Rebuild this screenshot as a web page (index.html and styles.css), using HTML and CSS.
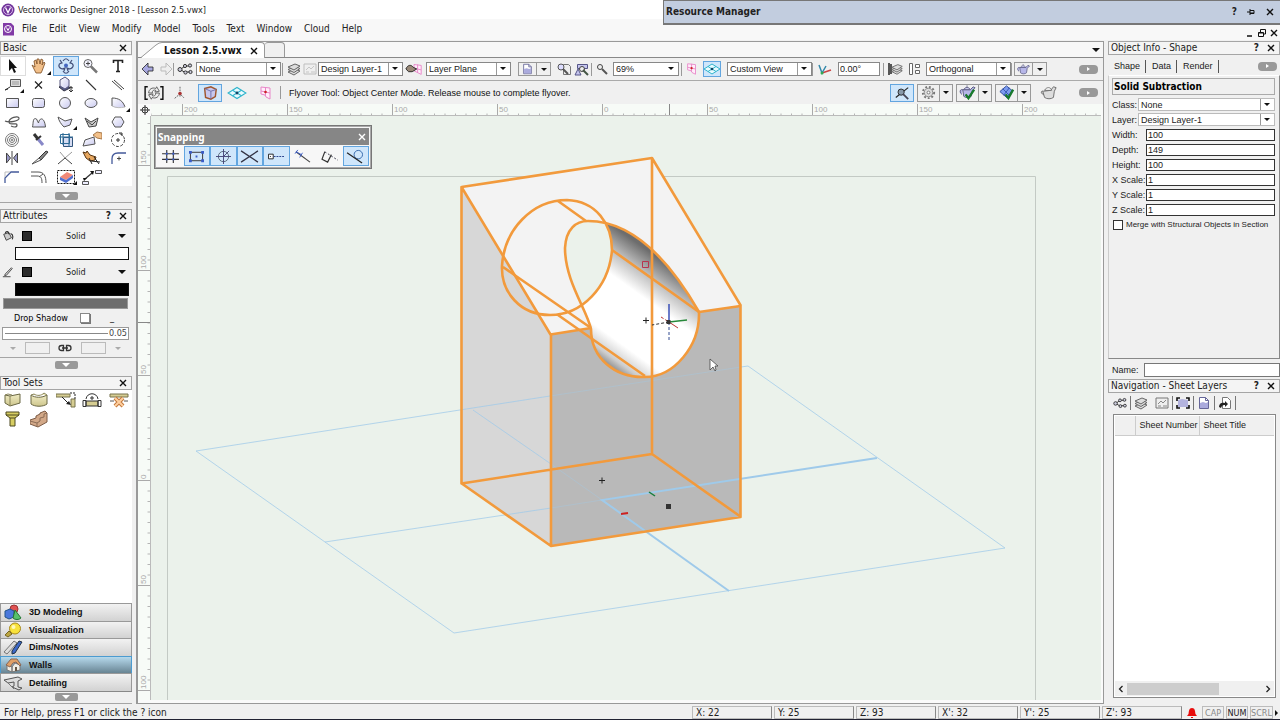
FILE: index.html
```html
<!DOCTYPE html>
<html lang="en">
<head>
<meta charset="utf-8">
<title>Vectorworks Designer 2018 - [Lesson 2.5.vwx]</title>
<link rel="stylesheet" href="styles.css">
</head>
<body>
<svg class="sprite" aria-hidden="true">
  <defs>
    <linearGradient id="lav" x1="0" y1="0" x2="1" y2="1"><stop offset="0" stop-color="#fff"/><stop offset="1" stop-color="#c9c9f0"/></linearGradient>
    <linearGradient id="wall" x1="0" y1="0" x2="0" y2="1"><stop offset="0" stop-color="#f0ecc4"/><stop offset="1" stop-color="#cdc58c"/></linearGradient>
  </defs>
  <symbol id="i-classes" viewBox="0 0 18 14"><g fill="#ccd" stroke="#333"><path d="M5 7L9 4M5 8l5 3M9 4h4M10 10h4" fill="none"/><circle cx="4" cy="7.500" r="2"/><circle cx="9" cy="4" r="1.600"/><circle cx="14" cy="3.500" r="1.600"/><circle cx="9.500" cy="10.500" r="1.600"/><circle cx="14.500" cy="10" r="1.600"/></g></symbol>
  <symbol id="i-layers" viewBox="0 0 16 14"><g fill="#ddd" stroke="#666"><path d="M2 10l7-3 5 2-6 4z"/><path d="M2 7.500l7-3 5 2-6 4z"/><path d="M2 5l7-3 5 2-6 4z"/></g></symbol>
  <symbol id="i-sheet" viewBox="0 0 16 14"><path d="M2 2h12v10H2z" fill="#eee" stroke="#777"/><path d="M4 8l3-3 2 2 3-3M4 10h3M9 10h4" fill="none" stroke="#888"/></symbol>
  <symbol id="i-doc" viewBox="0 0 16 14"><path d="M3.500 1.500h6l3 3v8h-9z" fill="#fff" stroke="#669"/><path d="M4 7l3-1 3 1 2-1v6H4z" fill="#aaaadd"/><path d="M9.500 1.500v3h3" fill="none" stroke="#669"/></symbol>
  <symbol id="i-plane" viewBox="0 0 16 16"><path d="M3 2l9 1v11l-4-2-1-2-4-1z" fill="#ffeefa" stroke="#e886c8"/><path d="M7.500 2v9M3 6l9 2" stroke="#e886c8"/><circle cx="7.500" cy="7" r="1.300" fill="#c22"/></symbol>
  <symbol id="i-flat" viewBox="0 0 18 14"><path d="M1 7l8-5 8 5-8 5z" fill="#e9fbff" stroke="#30b4cc"/><path d="M5 4.500l8 5M13 4.500l-8 5" stroke="#30b4cc"/><circle cx="9" cy="7" r="1.300" fill="#146"/></symbol>
  <symbol id="i-teapot" viewBox="0 0 18 16"><path d="M4 6l1 7c2 2 6 2 8 0l1-6 3-3-2-1-3 3H4c-3-1-4 3-1 5" fill="#b6b6e8" stroke="#5b5b82"/><path d="M5 6c1-3 6-3 7 0zM8.500 3V1.500" fill="#d5d5f7" stroke="#5b5b82"/></symbol>
  <symbol id="i-close" viewBox="0 0 10 10"><path d="M2 2l6 6M8 2l-6 6" stroke="#111" stroke-width="1.400"/></symbol>
</svg>

<header class="titlebar">
  <svg class="logo" viewBox="0 0 14 14"><circle cx="7" cy="7" r="6.500" fill="#70339a"/><circle cx="7" cy="7" r="4.500" fill="none" stroke="#d9b9ea"/><path d="M4.500 4.500L7 9.500l2.500-5" fill="none" stroke="#fff" stroke-width="1.300"/></svg>
  <span>Vectorworks Designer 2018 - [Lesson 2.5.vwx]</span>
</header>
<nav class="menubar">
  <svg class="logo" viewBox="0 0 14 14"><path d="M2 1h8l3 3v9.500H2z" fill="#813aa6"/><circle cx="7" cy="7" r="3.500" fill="none" stroke="#fff"/><path d="M5.500 5.500L7 8.500l1.500-3" fill="none" stroke="#fff"/></svg>
  <button>File</button><button>Edit</button><button>View</button><button>Modify</button><button>Model</button><button>Tools</button><button>Text</button><button>Window</button><button>Cloud</button><button>Help</button>
  <span class="mdi">
    <button aria-label="Minimize"><svg viewBox="0 0 10 10"><path d="M2 8h5" stroke="#111" stroke-width="1.500"/></svg></button>
    <button aria-label="Restore"><svg viewBox="0 0 10 10"><path d="M3.500 4V1.500h5V6H6.500M1.500 4.500h5v4h-5zM1.500 5h5" fill="none" stroke="#111"/></svg></button>
    <button aria-label="Close"><svg viewBox="0 0 10 10"><use href="#i-close"/></svg></button>
  </span>
</nav>
<section class="resource">
  <strong>Resource Manager</strong>
  <button class="q">?</button>
  <button aria-label="Pin"><svg viewBox="0 0 10 10"><path d="M1 5h3M4 2v6M4 3.500h4v3H4M4 6h4" fill="none" stroke="#111"/></svg></button>
  <button aria-label="Close"><svg viewBox="0 0 10 10"><use href="#i-close"/></svg></button>
</section>

<main class="workspace">
  <aside class="left">
    <h2 class="phead">Basic <button class="end" aria-label="Close Basic"><svg viewBox="0 0 10 10"><use href="#i-close"/></svg></button></h2>
    <div class="tools">
      <button class="boxed" aria-label="Selection"><svg viewBox="0 0 20 18"><path d="M6 2v12l3-3 2 5 2-1-2-4h3z" fill="#111"/></svg></button>
      <button class="more" aria-label="Pan"><svg viewBox="0 0 20 18"><path d="M2 8l3 2-1-6 2-1 1 4V2l2 0 1 5 1-5 2 1-1 5 2-3 1 1-3 8-1 2H6z" fill="#f2c08a" stroke="#7a4a20" stroke-width=".8"/></svg></button>
      <button class="on" aria-label="Flyover"><svg viewBox="0 0 20 18"><g fill="none" stroke="#44507a" stroke-width="1.200"><path d="M5 6c-4 2-2 6 3 6M15 6c4 2 2 6-3 6M7 4c2-3 4-3 6 0M7 14c2 3 4 3 6 0M4 3l2 3-3 1M16 3l-2 3 3 1M6 12l3-1-1 3M14 12l-3-1 1 3"/></g><circle cx="10" cy="8.500" r="2" fill="#4466c0"/></svg></button>
      <button aria-label="Zoom"><svg viewBox="0 0 20 18"><circle cx="6" cy="6.500" r="4" fill="#f4f4ff" stroke="#666"/><path d="M4 6.500h4M6 4.500v4" stroke="#444"/><path d="M9 9.500l6 6" stroke="#777" stroke-width="2.500"/></svg></button>
      <button aria-label="Text"><svg viewBox="0 0 20 18"><path d="M4.500 6V3.500h9V6M9 4v11M7 14.500h4" fill="none" stroke="#222" stroke-width="1.600"/></svg></button>
      <button class="more" aria-label="Callout"><svg viewBox="0 0 20 18"><path d="M7.500 3.500h10v7h-10z" fill="#ddd" stroke="#555"/><path d="M9 6h7M9 8h7" stroke="#999"/><path d="M7 11l-5 3 3-1" fill="none" stroke="#333"/></svg></button>
      <button aria-label="Locus"><svg viewBox="0 0 20 18"><path d="M5 5.500l7 7M12 5.500l-7 7" stroke="#222" stroke-width="1.200"/></svg></button>
      <button aria-label="Symbol"><svg viewBox="0 0 20 18"><path d="M3 11l5 4 6-3-5-4z" fill="#555a88" stroke="#334"/><path d="M4 4l5-3 4 3v6l-4 3-5-3z" fill="url(#lav)" stroke="#55557c"/><path d="M13 11l4 1M15 10v6M13 14l2 2 2-2" stroke="#333" fill="none"/></svg></button>
      <button aria-label="Line"><svg viewBox="0 0 20 18"><path d="M4 4l10 10" stroke="#333" stroke-width="1.100"/></svg></button>
      <button aria-label="Double line"><svg viewBox="0 0 20 18"><path d="M3 5l10 9M5 4l10 9" stroke="#444"/></svg></button>
      <button aria-label="Rectangle"><svg viewBox="0 0 20 18"><path d="M3.500 4.500h12v9h-12z" fill="url(#lav)" stroke="#555"/></svg></button>
      <button aria-label="Rounded rectangle"><svg viewBox="0 0 20 18"><rect x="2.500" y="4.500" width="12" height="9" rx="2" fill="url(#lav)" stroke="#555"/></svg></button>
      <button aria-label="Circle"><svg viewBox="0 0 20 18"><circle cx="9" cy="9" r="5.500" fill="url(#lav)" stroke="#555"/></svg></button>
      <button aria-label="Oval"><svg viewBox="0 0 20 18"><ellipse cx="9" cy="9" rx="6" ry="4.500" fill="url(#lav)" stroke="#555"/></svg></button>
      <button class="more" aria-label="Arc"><svg viewBox="0 0 20 18"><path d="M3 4c7 0 11 3 13 9l-9 1-4-2z" fill="url(#lav)"/><path d="M3 12V4c7 0 11 3 13 9" fill="none" stroke="#555"/><path d="M3 12c4 2 8 2 13 1" fill="none" stroke="#bbb"/></svg></button>
      <button aria-label="Freehand"><svg viewBox="0 0 20 18"><path d="M2 8c4 2 15 0 14-3S6 5 6 9s8 0 8 3-4 2-6 1" fill="none" stroke="#555" stroke-width="1.200"/></svg></button>
      <button aria-label="Spline"><svg viewBox="0 0 20 18"><path d="M2.500 14c1-4 0-10 4-8l2 4c1-6 6-6 7 4z" fill="url(#lav)" stroke="#555"/></svg></button>
      <button class="more" aria-label="Polyline"><svg viewBox="0 0 20 18"><path d="M2 4l7 4 7-2-2 6-6 2c-3-3-5-6-6-10z" fill="url(#lav)" stroke="#555"/></svg></button>
      <button aria-label="Polygon"><svg viewBox="0 0 20 18"><path d="M3 5l6 4 7-4-2 8-7 1z" fill="#ccc" stroke="#444"/><path d="M5 8l5 4 4-4" fill="none" stroke="#444"/></svg></button>
      <button aria-label="Regular polygon"><svg viewBox="0 0 20 18"><path d="M6 4h6l3 5-3 5H6L3 9z" fill="url(#lav)" stroke="#555"/></svg></button>
      <button aria-label="Spiral"><svg viewBox="0 0 20 18"><g fill="none" stroke="#777"><circle cx="9" cy="9" r="6.500"/><circle cx="9" cy="9" r="4.500"/><circle cx="9" cy="9" r="2.500"/><circle cx="9" cy="9" r=".8"/></g></svg></button>
      <button aria-label="Eyedropper"><svg viewBox="0 0 20 18"><path d="M8 8l5 6" stroke="#8888c8" stroke-width="3"/><path d="M4 3l4 5" stroke="#333" stroke-width="3"/><path d="M6 9l5-4" stroke="#333" stroke-width="2"/></svg></button>
      <button aria-label="Clip"><svg viewBox="0 0 20 18"><path d="M7.500 6.500h9v9h-9z" fill="#d5dcf2" stroke="#33557c"/><path d="M4.500 3.500h9v9h-9zM3 6h14M13 2v14M7 2v12" fill="none" stroke="#2c6b96"/></svg></button>
      <button aria-label="Reshape"><svg viewBox="0 0 20 18"><path d="M1 15l2-6 9-3 1 7z" fill="url(#lav)" stroke="#555"/><path d="M11 4l4-3 5 1v6l-5-1z" fill="#f2c08a" stroke="#a67748"/></svg></button>
      <button aria-label="Rotate"><svg viewBox="0 0 20 18"><circle cx="9" cy="9" r="6.500" fill="none" stroke="#444" stroke-dasharray="3 1.500"/><path d="M7 9h4M9 7v4M10 2l3 0v3" stroke="#333" fill="none"/></svg></button>
      <button aria-label="Mirror"><svg viewBox="0 0 20 18"><path d="M3.500 4v10l4-5zM14.500 4v10l-4-5z" fill="#9a9ac8" stroke="#444"/><path d="M9 2v14" stroke="#444"/></svg></button>
      <button aria-label="Split"><svg viewBox="0 0 20 18"><path d="M9 9l7-7 2 1-7 8z" fill="#888" stroke="#333"/><path d="M2 15l7-6 2 2z" fill="#eee" stroke="#555"/></svg></button>
      <button aria-label="Intersect"><svg viewBox="0 0 20 18"><path d="M4 3l5 6L16 3" stroke="#999" fill="none"/><path d="M2 15l7-6 7 6" stroke="#444" fill="none"/></svg></button>
      <button aria-label="Connect"><svg viewBox="0 0 20 18"><path d="M1 3l3 1 1-2 3 4 6 2-1 3-5 1-4-3z" fill="#e8a860" stroke="#553311"/><path d="M7 9l3 6M9 12l9 1M12 8l5 7" stroke="#222"/></svg></button>
      <button aria-label="Fillet"><svg viewBox="0 0 20 18"><path d="M3 15v-5c0-4 2-6 6-6h8" fill="none" stroke="#445a9a" stroke-width="1.300"/><path d="M8 9.500h4M10 7.500v4" stroke="#444"/></svg></button>
      <button aria-label="Chamfer"><svg viewBox="0 0 20 18"><path d="M2 15v-5l6-6h8" fill="none" stroke="#445a9a" stroke-width="1.300"/><path d="M2 4h5M2 4v5" stroke="#bbb"/></svg></button>
      <button aria-label="Offset"><svg viewBox="0 0 20 18"><path d="M1 4h7c6 0 8 4 8 11M1 8h6c4 0 5 2 5 7M9 9l4-3" fill="none" stroke="#555"/></svg></button>
      <button class="more" aria-label="Eraser"><svg viewBox="0 0 20 18"><path d="M1.500 2.500h17v13h-17z" fill="none" stroke="#111" stroke-dasharray="2 1"/><path d="M4 9l7-5 6 3-7 5z" fill="#f08878"/><path d="M4 9l6 3v3l-6-3zM10 12l7-5v3l-7 5z" fill="#4f6fd0"/></svg></button>
      <button aria-label="Connector"><svg viewBox="0 0 20 18"><path d="M.5 13.500h6v3h-6zM13.500 2.500h6v3h-6z" fill="#eef" stroke="#555"/><path d="M3 11l7-6" stroke="#333" stroke-width="1.200"/><path d="M8 3l4 0-1 4zM1 10l4 0-3 3z" fill="#111"/></svg></button>
    </div>
    <div class="fold"><button aria-label="Collapse Basic"></button></div>

    <h2 class="phead gap">Attributes <button class="q">?</button><button aria-label="Close Attributes"><svg viewBox="0 0 10 10"><use href="#i-close"/></svg></button></h2>
    <div class="attrs">
      <div class="style-row"><svg viewBox="0 0 14 14"><path d="M2 5l6-2 3 6-6 3z" fill="#ccc" stroke="#333"/><path d="M4 4c0-3 4-3 4 1M10 4c3 1 3 4 2 7" fill="none" stroke="#333" stroke-width="1.300"/></svg><i></i><select aria-label="Fill style"><option>Solid</option></select></div>
      <button class="swatch white" aria-label="Fill colour"></button>
      <div class="style-row"><svg viewBox="0 0 14 14"><path d="M4 9l7-7 1 1-7 8-2 0z" fill="#ccc" stroke="#444"/><path d="M1 12.500h9" stroke="#333"/></svg><i></i><select aria-label="Pen style"><option>Solid</option></select></div>
      <button class="swatch black" aria-label="Pen colour"></button>
      <button class="opacity" aria-label="Opacity"></button>
      <div class="shadow-row"><label for="shadow">Drop Shadow</label><input id="shadow" type="checkbox"><span>_</span></div>
      <button class="thickness" aria-label="Line thickness"><i></i>0.05</button>
      <div class="markers"><b></b><i></i><svg viewBox="0 0 14 10"><path d="M5.500 2.500h-2a2.500 2.500 0 000 5h2zM8.500 2.500h2a2.500 2.500 0 010 5h-2zM4 5h6" fill="none" stroke="#333" stroke-width="1.300"/></svg><i></i><b></b></div>
    </div>
    <div class="fold"><button aria-label="Collapse Attributes"></button></div>

    <h2 class="phead">Tool Sets <button class="end" aria-label="Close Tool Sets"><svg viewBox="0 0 10 10"><use href="#i-close"/></svg></button></h2>
    <div class="sets">
      <button aria-label="Wall"><svg viewBox="0 0 20 18"><path d="M2 4l5 1 10-2v9L7 15l-5-3z" fill="url(#wall)" stroke="#6b6844"/><path d="M2 4l3-1 4 1M7 5v10" fill="none" stroke="#8a865c"/></svg></button>
      <button aria-label="Round wall"><svg viewBox="0 0 20 18"><path d="M1 4c4 3 11 3 16 0v9c-4 3-12 3-16 0z" fill="url(#wall)" stroke="#6b6844"/><path d="M1 4l3-1c3 2 7 2 10-1l3 2" fill="#eee8bd" stroke="#8a865c"/></svg></button>
      <button aria-label="Wall join"><svg viewBox="0 0 20 18"><path d="M0 3h14v3H0zM15 8h4v8h-4z" fill="#d6cd92" stroke="#77724c"/><path d="M6 6l7 7" stroke="#222"/><path d="M14 2h5v6" fill="none" stroke="#222" stroke-dasharray="2 1"/><path d="M15 14l-5-1 3-3z" fill="#222"/></svg></button>
      <button aria-label="Component join"><svg viewBox="0 0 20 18"><path d="M4 10h12v5H4z" fill="#d6cd92" stroke="#333"/><path d="M1 9.500h3v6H1zM16 9.500h3v6h-3zM4 8c1-7 11-7 12 0M10 5v4M8 7h4" fill="none" stroke="#333"/></svg></button>
      <button aria-label="Wall end cap"><svg viewBox="0 0 20 18"><path d="M1 3h18v3H1z" fill="#d6cd92" stroke="#77724c"/><path d="M6 7l8 8M14 7l-8 8" stroke="#c2773a" stroke-width="4"/><path d="M6 7l8 8M14 7l-8 8" stroke="#ffd0a0" stroke-width="2"/><path d="M1 10h4M15 10h4" stroke="#555"/></svg></button>
      <button aria-label="Column"><svg viewBox="0 0 20 18"><path d="M3 2h13v3l-4 3v8H7V8L3 5z" fill="#d6cd62" stroke="#4d4820"/><path d="M3 5h13M7 8h5" stroke="#4d4820"/></svg></button>
      <button aria-label="Stair"><svg viewBox="0 0 20 18"><path d="M0 10l6-2V6l4-2V3l5-2 2 2v9l-9 5-8-3z" fill="#d2a888" stroke="#7c5b45"/><path d="M0 11l7 2 3-2V8l4-1V4l3-1M7 13v4" fill="none" stroke="#8c6c55"/></svg></button>
    </div>
    <div class="cats">
      <button><svg viewBox="0 0 20 16"><circle cx="11" cy="5" r="4" fill="#e05252" stroke="#933"/><path d="M2 7l5-2 4 2v6l-5 2-4-2z" fill="#4a78dc" stroke="#258"/><path d="M12 6l6 8c-2 2-6 2-8 0z" fill="#58c26a" stroke="#273"/></svg>3D Modeling</button>
      <button><svg viewBox="0 0 20 16"><circle cx="12" cy="6.500" r="5.500" fill="#f8e23c" stroke="#a8891c"/><circle cx="10.500" cy="5" r="2" fill="#fff9b8"/><path d="M6 9l3 3-4 3-3-2z" fill="#bba542" stroke="#776622"/></svg>Visualization</button>
      <button><svg viewBox="0 0 20 16"><path d="M1 13L11 2l3 2L4 15z" fill="#ddd" stroke="#777"/><path d="M9 12l7-10 3 1-7 11-3 1z" fill="#3d68c8" stroke="#234"/></svg>Dims/Notes</button>
      <button class="sel"><svg viewBox="0 0 20 16"><path d="M4 7l5 3v5l-5-2zM9 10l3-4 5 2v5l-8 2z" fill="#f1eee6" stroke="#777"/><path d="M3 8l5-6 6 0 4 6-1 1-4-4-3 1-3 4z" fill="#e0a067" stroke="#865"/><path d="M12 10h2v4h-2z" fill="#654"/></svg>Walls</button>
      <button><svg viewBox="0 0 20 16"><path d="M1 5L15 2l4 2-4 2v6l4 1-3 2-7-3 2-1V7L5 8z" fill="#ddd" stroke="#555"/><path d="M3 6l8 8" stroke="#777"/></svg>Detailing</button>
    </div>
    <div class="fold last"><button aria-label="Collapse Tool Sets"></button></div>
  </aside>

  <section class="center">
    <div class="tabs">
      <svg class="slant" viewBox="0 0 26 16"><path d="M3 16L18 3q3-2.500 6-2.500h2V16z" fill="#fff"/><path d="M3 15.500L18 3q3-2.500 6-2.500h2" fill="none" stroke="#999"/></svg>
      <button class="tab">Lesson 2.5.vwx <svg viewBox="0 0 10 10"><use href="#i-close"/></svg></button><i class="newtab"></i>
      <button class="tri" aria-label="Open documents"></button>
    </div>
    <div class="bar view">
      <button class="ic w18" aria-label="Back"><svg viewBox="0 0 16 14"><path d="M8 1L2 7l6 6V9h5V5H8z" fill="#a8a8e0" stroke="#222" stroke-width=".8"/></svg></button>
      <button class="ic w16" aria-label="Forward"><svg viewBox="0 0 16 14"><path d="M8 1l6 6-6 6V9H3V5h5z" fill="#eee" stroke="#bbb"/></svg></button><hr>
      <button class="ic w20" aria-label="Classes"><svg viewBox="0 0 18 14"><use href="#i-classes"/></svg></button>
      <span class="combo w84"><select aria-label="Active class"><option>None</option></select></span><hr class="sp">
      <button class="ic w16" aria-label="Layers"><svg viewBox="0 0 16 14"><use href="#i-layers"/></svg></button>
      <button class="ic w16 dim" aria-label="Sheets"><svg viewBox="0 0 16 14"><use href="#i-sheet"/></svg></button>
      <span class="combo w84"><select aria-label="Active layer"><option>Design Layer-1</option></select></span>
      <button class="ic w22" aria-label="Plane"><svg viewBox="0 0 20 14"><path d="M10 2l8 1v10l-8-4zM10 6l8 2M14 2v9" fill="#ffeefa" stroke="#e886c8"/><path d="M1 7c2-5 6-5 8-2l4 2-5 3H4z" fill="#987" stroke="#222"/></svg></button>
      <span class="combo w84"><select aria-label="Active plane"><option>Layer Plane</option></select></span>
      <button class="duo" aria-label="Saved views"><svg viewBox="0 0 16 14"><use href="#i-doc"/></svg><i></i></button>
      <button class="ic w18" aria-label="Fit to page"><svg viewBox="0 0 18 14"><path d="M8.500 2.500h5l2 2v8h-7z" fill="#eee" stroke="#777"/><circle cx="6" cy="5" r="3" fill="#ddf" stroke="#555"/><path d="M8 7l5 5" stroke="#555" stroke-width="2"/></svg></button>
      <button class="ic w18" aria-label="Fit to objects"><svg viewBox="0 0 18 14"><path d="M4.500 2.500h10v4h-10zM2 13l3-6 3 6z" fill="#c5c5ee" stroke="#558"/><circle cx="9" cy="7" r="2.500" fill="#eee" stroke="#444"/><path d="M10 8l5 5" stroke="#454" stroke-width="2"/></svg></button><hr>
      <button class="ic w20" aria-label="Zoom line"><svg viewBox="0 0 18 14"><circle cx="6" cy="5" r="2.500" fill="#eee" stroke="#444"/><path d="M8 7l5 5" stroke="#555" stroke-width="2"/></svg></button>
      <span class="combo w66 plain"><select aria-label="Zoom"><option>69%</option></select></span><hr>
      <button class="ic w18" aria-label="Projection"><svg viewBox="0 0 16 16"><use href="#i-plane"/></svg></button>
      <button class="ic w18 on" aria-label="Unified view"><svg viewBox="0 0 18 14"><use href="#i-flat"/></svg></button>
      <span class="combo w86"><select aria-label="Standard view"><option>Custom View</option></select></span><hr>
      <button class="ic w24" aria-label="Rotate plan"><svg viewBox="0 0 18 14"><path d="M5 11l9-3" stroke="#c44" stroke-width="1.500"/><path d="M2 3l3 8 4-7" stroke="#38a" stroke-width="1.500" fill="none"/><circle cx="5" cy="11" r="1.500" fill="#3a5"/></svg></button>
      <input class="w42" aria-label="Plan rotation" value="0.00°"><hr>
      <button class="ic w20" aria-label="Stack layers"><svg viewBox="0 0 18 14"><path d="M3 1v12M5 2v10" stroke="#222" stroke-width="1.500"/><use href="#i-layers" x="4" width="14" height="14"/></svg></button>
      <button class="ic w20" aria-label="Multiple views"><svg viewBox="0 0 18 14"><path d="M3.500 1.500h3v11h-3zM9.500 2.500h4v3h-4zM9.500 8.500h4v3h-4z" fill="#fff" stroke="#666"/></svg></button>
      <span class="combo w84"><select aria-label="Projection mode"><option>Orthogonal</option></select></span><hr>
      <button class="duo" aria-label="Render mode"><svg viewBox="0 0 18 16"><use href="#i-teapot"/></svg><i></i></button>
      <button class="pill" aria-label="More view options"></button>
    </div>
    <div class="bar mode">
      <button class="ic w26" aria-label="Toggle mode"><svg viewBox="0 0 22 18"><path d="M4 2H1v14h3M18 2h3v14h-3" fill="none" stroke="#111" stroke-width="1.600"/><path d="M5 9c0-4 4-7 8-5l1-2 3 5-5 1 1-2c-2-1-4 0-4 3zM17 9c0 4-4 7-8 5l-1 2-3-5 5-1-1 2c2 1 4 0 4-3z" fill="#eee" stroke="#555"/></svg></button>
      <button class="ic w26" aria-label="Interactive center"><svg viewBox="0 0 20 18"><path d="M10 2v12M4 15l6-5 5 5" stroke="#555" stroke-dasharray="2 1" fill="none"/><circle cx="10" cy="9.500" r="2" fill="#a33"/></svg></button>
      <button class="ic w24 on big" aria-label="Object center mode"><svg viewBox="0 0 20 18"><path d="M4 4l7-2 6 3-1 8-5 3-6-2z" fill="#c7c7ee" stroke="#a0552c" stroke-width="1.600"/><path d="M4 4l7 3 6-2M11 7v9" fill="none" stroke="#6b6ba8"/></svg></button>
      <button class="ic w30" aria-label="Plane center"><svg viewBox="0 0 18 14"><use href="#i-flat"/></svg></button>
      <button class="ic w30" aria-label="View center"><svg viewBox="0 0 16 16"><use href="#i-plane"/></svg></button><hr>
      <span class="hint">Flyover Tool: Object Center Mode. Release mouse to complete flyover.</span>
      <span class="modes-right">
        <button class="ic w24 on big" aria-label="Magnify snap"><svg viewBox="0 0 20 18"><path d="M3 14L17 3" stroke="#222" stroke-width="1.300"/><circle cx="9" cy="8" r="3.500" fill="#89a" stroke="#222"/><path d="M11 10l6 6" stroke="#445" stroke-width="2"/></svg></button>
        <button class="duo big" aria-label="Preferences"><svg viewBox="0 0 18 18"><circle cx="9" cy="9" r="6" fill="none" stroke="#777" stroke-width="2" stroke-dasharray="2 2"/><circle cx="9" cy="9" r="4.500" fill="#ddd" stroke="#888"/><circle cx="9" cy="9" r="1.500" fill="#fff" stroke="#777"/></svg><i></i></button>
        <button class="duo big" aria-label="Render visibility"><svg viewBox="0 0 18 18"><use href="#i-teapot" width="18" height="16"/><path d="M7 11l3 4 6-9" stroke="#187a2c" stroke-width="2.500" fill="none"/></svg><i></i></button>
        <button class="duo big" aria-label="Render texture"><svg viewBox="0 0 18 18"><path d="M2 8l7-6 6 5-5 8z" fill="#7d9cf0" stroke="#2c4a9c"/><path d="M5 5l7 7M6 12l6-8" stroke="#3558b0"/><path d="M8 11l3 4 5-9" stroke="#187a2c" stroke-width="2.500" fill="none"/></svg><i></i></button>
        <button class="ic w30" aria-label="Show object"><svg viewBox="0 0 20 18"><path d="M3 7l2 7c3 2 7 2 10 0l1-7 2-4-3-1-3 4-8 1C1 6 0 9 4 11" fill="#ddd" stroke="#666"/><path d="M5 6c2-4 7-4 8 0z" fill="#fff" stroke="#666"/></svg></button>
        <button class="pill" aria-label="More tool options"></button>
      </span>
    </div>
    <div class="sheet">
      <div class="corner"><svg viewBox="0 0 12 12"><circle cx="6" cy="6" r="3" fill="none" stroke="#333"/><path d="M6 1v10M1 6h10" stroke="#333"/></svg></div>
      <svg class="ruler-x"><defs><pattern id="tx" x="31" width="105" height="12" patternUnits="userSpaceOnUse"><path d="M.5 0v12" stroke="#aaa"/><path d="M11 9.500v2.500M21.500 9.500v2.500M32 9.500v2.500M42.500 9.500v2.500M53 9.500v2.500M63.500 9.500v2.500M74 9.500v2.500M84.500 9.500v2.500M95 9.500v2.500" stroke="#b5b5b5"/></pattern></defs>
        <rect width="100%" height="12" fill="url(#tx)"/><path d="M518.500 0v12" stroke="#888"/>
        <g><text x="33" y="8">200</text><text x="138" y="8">150</text><text x="243" y="8">100</text><text x="348" y="8">50</text><text x="453" y="8">0</text><text x="558" y="8">50</text><text x="663" y="8">100</text><text x="768" y="8">150</text><text x="873" y="8">200</text></g></svg>
      <svg class="ruler-y"><defs><pattern id="ty" y="49" width="12" height="105" patternUnits="userSpaceOnUse"><path d="M0 .5h12" stroke="#aaa"/><path d="M9.500 11h2.500M9.500 21.500h2.500M9.500 32h2.500M9.500 42.500h2.500M9.500 53h2.500M9.500 63.500h2.500M9.500 74h2.500M9.500 84.500h2.500M9.500 95h2.500" stroke="#b5b5b5"/></pattern></defs>
        <rect width="12" height="100%" fill="url(#ty)"/><path d="M0 206.500h12" stroke="#888"/>
        <g><text transform="translate(8 48) rotate(-90)">150</text><text transform="translate(8 153) rotate(-90)">100</text><text transform="translate(8 258) rotate(-90)">50</text><text transform="translate(8 363) rotate(-90)">0</text><text transform="translate(8 468) rotate(-90)">50</text><text transform="translate(8 573) rotate(-90)">100</text></g></svg>
      <div class="canvas">
        <svg class="scene" role="img" aria-label="Solid subtraction model">
          <defs>
            <linearGradient id="bore" gradientUnits="userSpaceOnUse" x1="650" y1="252" x2="580" y2="349.500"><stop offset="0" stop-color="#6d6d6d"/><stop offset=".16" stop-color="#bbb"/><stop offset=".34" stop-color="#fff"/><stop offset=".76" stop-color="#fff"/><stop offset=".9" stop-color="#ccc"/><stop offset="1" stop-color="#777"/></linearGradient>
            <clipPath id="hole"><path id="mouth" d="M591 329C587 310 565 281 565 248C566 229 576 221 588 221C630 221 667 256 699 312C700 346 674 377 645 377C615 378 591 358 591 329Z"/></clipPath>
          </defs>
          <g transform="translate(-151 -116)">
            <path d="M167.500 720V176.500H1035.500V720" fill="none" stroke="#c3cac4"/>
            <path d="M461 187L550 334V546L461 483z" fill="#d7d7d7"/>
            <path d="M461 187L652 158 741 306 550 334z" fill="#f3f3f3"/>
            <path d="M550 334L741 306V517L551 546z" fill="#b9b9b9"/>
            <g fill="none" stroke="#9fcaea" stroke-width="1"><path d="M550 396L741 367M551 508L602 500M551 464L602 500" opacity=".35"/><path d="M550 396L196 451 454 633 1005 548 748 366 741 367M325 542L551 508M473 410L551 464" opacity=".75"/><path d="M877 458L602 500 729 591" stroke-width="2"/></g>
            <use href="#mouth" fill="url(#bore)"/>
            <path d="M502 266C504 230 532 200 567 200C596 201 612 224 612 250C609 287 582 315 550 315C520 315 501 292 502 266Z" fill="#ebf2eb" clip-path="url(#hole)"/>
            <g fill="none" stroke="#f29a3c" stroke-width="2.600" stroke-linejoin="round">
              <path d="M461.500 187L652 158 741 306M652 158V454L461.500 483.500V187L550.500 334.500 591 328M699 312L740.500 306V517L551 546V334M461 483L551 546M652 454L741 517"/>
              <path d="M591 329C587 310 565 281 565 248C566 229 576 221 588 221C630 221 667 256 699 312C700 346 674 377 645 377C615 378 591 358 591 329Z"/>
              <path d="M502 266C504 230 532 200 567 200C596 201 612 224 612 250C609 287 582 315 550 315C520 315 501 292 502 266ZM558 201L586 221M612 250L699 312M503 267L591 328M558 315L645 376"/>
            </g>
            <path d="M642.500 261.500h6v6h-6z" fill="none" stroke="#b8344e"/>
            <path d="M643 320.500h6M646 317.500v6M599 480.500h6M602 477.500v6" stroke="#222"/>
            <path d="M669 304v18" stroke="#3b50b8" stroke-width="1.500"/><path d="M669 322v20" stroke="#334a90" stroke-dasharray="3 2"/><path d="M669 322l18-2" stroke="#27883a" stroke-width="1.500"/><path d="M669 322l-17 3" stroke="#333" stroke-dasharray="3 2"/><path d="M669 322l9 6" stroke="#b33"/><path d="M661 317l8 5" stroke="#b33" stroke-dasharray="3 2"/>
            <path d="M666.500 320h4v4h-4z" fill="#333"/><path d="M666 504h5v5h-5z" fill="#333"/>
            <path d="M649 492l6 4" stroke="#187c3a" stroke-width="1.500"/><path d="M621 514l7-1" stroke="#c22" stroke-width="1.800"/>
            <path d="M710 359v11l3-3 2 4 1-1-1-4h3z" fill="#fff" stroke="#444" stroke-width=".8"/>
          </g>
        </svg>
        <div class="snap">
          <h2>Snapping <button aria-label="Close Snapping"><svg viewBox="0 0 10 10"><path d="M2 2l6 6M8 2l-6 6" stroke="#fff" stroke-width="1.400"/></svg></button></h2>
          <div class="snaps">
            <button aria-label="Snap to grid"><svg viewBox="0 0 20 16"><path d="M1 5h18M1 11h18M6 1v14M13 1v14" stroke="#333" stroke-width="1.200"/><path d="M5 4h2v2H5zM12 4h2v2h-2zM5 10h2v2H5zM12 10h2v2h-2z" fill="#3a5cc8"/></svg></button>
            <button class="on" aria-label="Snap to object"><svg viewBox="0 0 20 16"><path d="M3.500 3.500h13v9h-13z" fill="none" stroke="#333"/><path d="M2 2h3v3H2zM15 2h3v3h-3zM2 11h3v3H2zM15 11h3v3h-3zM9 7h2v2H9z" fill="#3a5cc8"/></svg></button>
            <button class="on" aria-label="Snap to angle"><svg viewBox="0 0 20 16"><circle cx="10" cy="8" r="5.500" fill="none" stroke="#567"/><path d="M2 8h16M10 0v16M10 8l6-6" stroke="#447" fill="none"/></svg></button>
            <button class="on" aria-label="Snap to intersection"><svg viewBox="0 0 20 16"><path d="M1 2l18 12M19 2L1 14" stroke="#334" stroke-width="1.300"/></svg></button>
            <button class="on" aria-label="Smart points"><svg viewBox="0 0 20 16"><path d="M1.500 5.500h5v5h-5zM3 8h1" fill="#fff" stroke="#222"/><path d="M7 8h12" stroke="#223a88" stroke-dasharray="2 1"/></svg></button>
            <button aria-label="Snap to distance"><svg viewBox="0 0 20 16"><path d="M3 3l15 11" stroke="#444" stroke-width="1.200"/><path d="M2 5l3-4M7 9l3-5M3 3l6 3" stroke="#3a5cc8"/></svg></button>
            <button aria-label="Smart edge"><svg viewBox="0 0 20 16"><path d="M5 3l-3 8 6 3 4-8" fill="none" stroke="#333" stroke-width="1.200"/><path d="M5 3l14 9" stroke="#334" stroke-dasharray="2 2"/></svg></button>
            <button class="on" aria-label="Snap to tangent"><svg viewBox="0 0 20 16"><circle cx="13" cy="6" r="4.500" fill="none" stroke="#36a"/><path d="M1 4l16 11" stroke="#222" stroke-width="1.300"/></svg></button>
          </div>
        </div>
      </div>
    </div>
  </section>

  <aside class="right">
    <h2 class="phead">Object Info - Shape <button class="q">?</button><button aria-label="Close Object Info"><svg viewBox="0 0 10 10"><use href="#i-close"/></svg></button></h2>
    <div class="otabs"><button>Shape</button><button>Data</button><button>Render</button><button class="pill" aria-label="More tabs"></button></div>
    <div class="info">
      <h3>Solid Subtraction</h3>
      <div class="field sel"><label for="cls">Class:</label><span class="combo"><select id="cls"><option>None</option></select></span></div>
      <div class="field sel"><label for="lay">Layer:</label><span class="combo"><select id="lay"><option>Design Layer-1</option></select></span></div>
      <div class="field"><label for="wd">Width:</label><input id="wd" value="100"></div>
      <div class="field"><label for="dp">Depth:</label><input id="dp" value="149"></div>
      <div class="field"><label for="ht">Height:</label><input id="ht" value="100"></div>
      <div class="field"><label for="xs">X Scale:</label><input id="xs" value="1"></div>
      <div class="field"><label for="ys">Y Scale:</label><input id="ys" value="1"></div>
      <div class="field"><label for="zs">Z Scale:</label><input id="zs" value="1"></div>
      <div class="check"><input id="mrg" type="checkbox"><label for="mrg">Merge with Structural Objects in Section</label></div>
    </div>
    <div class="name"><label for="nm">Name:</label><input id="nm"></div>
    <h2 class="phead">Navigation - Sheet Layers <button class="q">?</button><button aria-label="Close Navigation"><svg viewBox="0 0 10 10"><use href="#i-close"/></svg></button></h2>
    <div class="ntabs">
      <button aria-label="Classes"><svg viewBox="0 0 18 14"><use href="#i-classes"/></svg></button>
      <button aria-label="Design layers"><svg viewBox="0 0 16 14"><use href="#i-layers"/></svg></button>
      <button aria-label="Sheet layers"><svg viewBox="0 0 16 14"><use href="#i-sheet"/></svg></button>
      <button aria-label="Viewports"><svg viewBox="0 0 16 14"><path d="M3 4l4-1 6 1v7H3z" fill="#b3b3de"/><path d="M2 5V2h3M11 2h3v3M2 9v3h3M11 12h3V9" fill="none" stroke="#111" stroke-width="1.600"/></svg></button>
      <button aria-label="Saved views"><svg viewBox="0 0 16 14"><use href="#i-doc"/></svg></button>
      <button aria-label="References"><svg viewBox="0 0 16 14"><path d="M5.500 1.500h5l3 3v8h-8z" fill="#fff" stroke="#777"/><path d="M2 11c0-4 3-5 6-4V5l3 3-3 3V9c-3 0-3 1-4 3z" fill="#222"/></svg></button>
    </div>
    <div class="list">
      <table><thead><tr><th></th><th>Sheet Number</th><th>Sheet Title</th></tr></thead></table>
      <div class="hscroll"><button aria-label="Scroll left"><svg viewBox="0 0 10 10"><path d="M6.500 2l-3 3 3 3" fill="none" stroke="#222" stroke-width="1.300"/></svg></button><i></i><button aria-label="Scroll right"><svg viewBox="0 0 10 10"><path d="M3.500 2l3 3-3 3" fill="none" stroke="#222" stroke-width="1.300"/></svg></button></div>
    </div>
  </aside>
</main>

<footer class="status">
  <span class="help">For Help, press F1 or click the ? icon</span>
  <span class="cell">X: 22</span><span class="cell">Y: 25</span><span class="cell">Z: 93</span><span class="cell">X': 32</span><span class="cell">Y': 25</span><span class="cell">Z': 93</span>
  <svg class="bell" viewBox="0 0 12 12"><path d="M6 1c3 0 3 3 3.500 6l1.500 2H1l1.500-2C3 4 3 1 6 1zM5 10h2v1H5z" fill="#e80c0c"/></svg>
  <span class="key off">CAP</span><span class="key">NUM</span><span class="key off">SCRL</span><i class="arrow"></i>
</footer>
</body>
</html>
```
FILE: styles.css
```css
:root {
  --ui: "DejaVu Sans Condensed", "DejaVu Sans", sans-serif;
  --small: "Liberation Sans", Arial, sans-serif;
  --line: #a5a5a5;
  --face: #f0f0f0;
}
* { box-sizing: border-box; }
body {
  margin: 0;
  height: 100vh;
  display: flex;
  flex-direction: column;
  overflow: hidden;
  background: var(--face);
  font: 9px/12px var(--small);
  color: #222;
}
button, input, select {
  font: inherit;
  color: inherit;
  margin: 0;
  padding: 0;
  border: 0;
  background: none;
  border-radius: 0;
}
select { appearance: none; }
svg { display: block; }
.sprite { position: absolute; width: 0; height: 0; }

.titlebar { display: flex; align-items: center; gap: 3px; height: 19px; padding-left: 1px; background: #fff; font: 9px/12px var(--ui); }
.logo { width: 14px; height: 14px; }
.menubar { display: flex; align-items: center; height: 21px; padding: 0 1px 2px; background: #f8f8f8; font: 10px/12px var(--ui); }
.menubar > button { margin-left: 12px; }
.menubar > button:first-of-type { margin-left: 7px; }
.mdi { margin-left: auto; display: flex; gap: 2px; padding-top: 8px; }
.mdi svg { width: 10px; height: 10px; }
.resource { position: absolute; top: 0; right: 0; width: 617px; height: 25px; display: flex; align-items: center; gap: 9px; padding: 0 5px 0 2px; background: #c2cddf; border: 2px solid #777; border-width: 1px 0 2px 1px; font: 10px/12px var(--ui); }
.resource strong { margin-right: auto; }
.resource svg { width: 10px; height: 10px; }
.q { font-weight: bold; font-size: 10px; }

.workspace { flex: 1; min-height: 0; display: grid; grid-template-columns: 132px minmax(0, 1fr) 172px; column-gap: 4px; padding-top: 1px; }
.phead { display: flex; align-items: center; gap: 7px; height: 14px; margin: 0; padding: 0 3px 0 2px; border: 1px solid var(--line); background: #f4f4f4; font: 10px/12px var(--ui); flex: none; }
.phead button:first-of-type { margin-left: auto; }
.phead svg { width: 10px; height: 10px; }
.left { display: flex; flex-direction: column; min-height: 0; }
.tools { display: grid; grid-template-columns: repeat(5, 1fr); grid-template-rows: repeat(7, 1fr); height: 130px; margin-top: 1px; background: #fff; flex: none; }
.tools button, .sets button { display: grid; place-items: center; position: relative; }
.tools svg, .sets svg { width: 20px; height: 18px; }
.tools .boxed { border: 1px solid #ddd; }
.on { background: #cfe6fb; outline: 1px solid #62a5df; outline-offset: -1px; }
.more::after { content: ""; position: absolute; right: 2px; bottom: 1px; border: 2px solid; border-color: transparent #111 #111 transparent; }
.fold { flex: none; height: 17px; padding-top: 6px; border-bottom: 1px solid var(--line); display: flex; justify-content: center; align-items: flex-start; }
.fold button { width: 23px; height: 8px; border-radius: 2px; background: #999; display: grid; place-items: center; }
.fold button::after { content: ""; border: 4px solid transparent; border-top-color: #fff; border-bottom: 0; }
.gap { margin-top: 6px; }
.attrs { flex: none; display: flex; flex-direction: column; padding: 2px 3px 1px 2px; border-bottom: 1px solid var(--line); }
.style-row { display: flex; align-items: center; height: 22px; position: relative; font: 9px/12px var(--ui); }
.style-row svg { width: 12px; height: 12px; margin-right: 8px; }
.style-row i { width: 10px; height: 10px; background: #2c2c2c; border: 1px solid #000; }
.style-row select { flex: 1; padding-left: 34px; }
.style-row::after { content: ""; position: absolute; right: 3px; top: 9px; border: 4px solid transparent; border-top-color: #111; border-bottom: 0; }
.swatch { height: 13px; margin: 0 0 1px 13px; border: 1px solid #111; }
.white { background: #fff; }
.black { background: #000; }
.opacity { height: 11px; margin: 1px 1px 0; background: #6d6d6d; border: 1px solid #999; }
.shadow-row { display: flex; align-items: center; height: 18px; padding-left: 12px; gap: 12px; font: 9px/12px var(--ui); color: #000; }
input[type="checkbox"] { appearance: none; width: 10px; height: 10px; background: #fff; border: 1px solid #333; flex: none; }
.shadow-row input { border-color: #888; box-shadow: 1px 1px #777; }
.shadow-row span { margin-left: 8px; }
.thickness { display: flex; align-items: center; height: 13px; border: 1px solid #999; background: #fff; padding: 0 1px 0 2px; font: 9px/11px var(--ui); color: #444; }
.thickness i { flex: 1; height: 1px; background: #888; margin-right: 1px; }
.markers { display: flex; align-items: center; justify-content: space-around; height: 16px; padding: 0 4px; }
.markers i { width: 25px; height: 12px; border: 1px solid #bbb; }
.markers b { border: 3px solid transparent; border-top-color: #aaa; border-bottom: 0; }
.markers svg { width: 14px; height: 10px; }
.attrs + .fold { border: 0; height: 18px; padding-top: 3px; }
.sets { flex: 1; min-height: 0; display: grid; grid-template-columns: repeat(5, 1fr); grid-auto-rows: 19px; align-content: start; background: #fff; }
.cats { flex: none; display: grid; grid-template-rows: repeat(5, 1fr); height: 89px; border-bottom: 1px solid #888; }
.cats button { display: flex; align-items: center; gap: 6px; padding-left: 2px; border: 1px solid #999; border-bottom: 0; background: linear-gradient(#f2f2f2, #d2d2d2); font: bold 9px/12px var(--small); color: #111; }
.cats svg { width: 20px; height: 16px; }
.cats .sel { background: linear-gradient(#b6d9ec, #688493); border-color: #4c9bd0; }
.fold.last { height: 12px; padding-top: 1px; }

.center { display: flex; flex-direction: column; min-width: 0; min-height: 0; border: 1px solid #999; border-width: 1px 1px 1px 2px; background: #fafafa; }
.tabs { display: flex; height: 16px; background: #f7f7f7; flex: none; border-bottom: 1px solid #888; }
.slant { width: 26px; height: 16px; flex: none; }
.tab { display: flex; align-items: center; gap: 7px; padding-right: 5px; background: #fff; border-top: 1px solid #999; border-right: 1px solid #999; font: bold 10px/12px var(--ui); color: #111; height: 16px; border-radius: 0 4px 0 0; }
.tab svg { width: 10px; height: 10px; }
.newtab { width: 20px; border: 1px solid #999; border-width: 1px 1px 0 0; border-radius: 3px 4px 0 0; background: #f0f0f0; }
.tri { margin-left: auto; width: 14px; display: grid; place-items: center; }
.tri::after, .combo::after, .duo i::after { content: ""; border: 3px solid transparent; border-top-color: #111; border-bottom: 0; }
.tri::after { border-width: 4px 4px 0; }
.bar { display: flex; align-items: center; flex: none; background: var(--face); padding: 0 5px 0 1px; }
.bar > * { flex: none; }
.view { height: 23px; border-bottom: 1px solid #aaa; }
.mode { height: 23px; padding-left: 3px; }
.bar hr { width: 1px; height: 13px; margin: 0 1px 0 0; border: 0; background: #999; }
.bar hr.sp { margin: 0 2px 0 1px; }
.ic { display: grid; place-items: center; height: 16px; }
.ic svg { height: 14px; width: 18px; }
.dim { opacity: .4; }
.w16 { width: 16px; } .w18 { width: 18px; } .w20 { width: 20px; } .w22 { width: 22px; } .w24 { width: 24px; } .w26 { width: 26px; } .w30 { width: 29px; }
.w42 { width: 42px; } .w66 { width: 66px; } .w84 { width: 85px; } .w86 { width: 85px; margin-left: 6px; }
.combo { position: relative; display: flex; height: 14px; border: 1px solid #888; background: #fff; }
.combo select { flex: 1; min-width: 0; padding-left: 2px; line-height: 12px; }
.combo::before { content: ""; position: absolute; right: 13px; top: 0; bottom: 0; width: 1px; background: #999; }
.combo.plain::before { display: none; }
.combo::after { position: absolute; right: 4px; top: 4px; }
.bar input { height: 14px; border: 1px solid #888; background: #fff; padding-left: 1px; margin-right: 3px; }
.view .w66 { margin-right: 2px; }
.view .on { margin-left: 2px; }
.duo { display: flex; align-items: center; height: 14px; width: 33px; border: 1px solid #999; padding: 0; }
.duo svg { width: 17px; height: 12px; }
.duo i { flex: 1; align-self: stretch; display: grid; place-items: center; border-left: 1px solid #999; }
.view .duo { margin: 0 4px 0 7px; }
.view hr + .duo { margin-left: 1px; }
.view .ic + .combo.w84 { margin-left: 1px; }
.pill { width: 19px; height: 9px; border-radius: 4px; background: #999; display: grid; place-items: center; }
.pill::after { content: ""; border: 2px solid transparent; border-left: 3px solid #fff; border-right: 0; }
.bar > .pill { margin-left: auto; }
.big { height: 18px; }
.duo.big { width: 36px; height: 18px; }
.duo.big svg { width: 21px; height: 17px; }
.mode .ic svg { width: 20px; height: 16px; }
.mode > .on { margin-left: 5px; }
.hint { margin-left: 7px; color: #111; }
.modes-right { margin-left: auto; display: flex; align-items: center; gap: 3px; }
.modes-right .pill { margin-left: 13px; }

.sheet { flex: 1; min-height: 0; display: grid; grid-template: 12px minmax(0, 1fr) / 13px minmax(0, 1fr); padding: 0 2px 3px 0; }
.corner { display: grid; place-items: center; }
.corner svg { width: 12px; height: 12px; }
.ruler-x, .ruler-y { width: 100%; height: 100%; background: #f7fbf7; overflow: hidden; }
.ruler-x { border-bottom: 1px solid #bbb; }
.ruler-y { border-right: 1px solid #bbb; }
.sheet text { font: 8px var(--small); fill: #aaa; }
.canvas { position: relative; background: #ebf2eb; overflow: hidden; min-height: 0; }
.scene { width: 100%; height: 100%; }
.snap { position: absolute; left: 3px; top: 9px; width: 218px; border: 1px solid #777; outline: 1px solid #aaa; outline-offset: -2px; padding: 2px; background: #f7f7f7; }
.snap h2 { margin: 0; height: 17px; display: flex; align-items: center; justify-content: space-between; padding: 0 2px 0 1px; background: #868686; color: #fff; font: bold 10px/12px "Noto Sans", sans-serif; }
.snap h2 svg { width: 10px; height: 10px; }
.snaps { display: grid; grid-template-columns: repeat(8, 1fr); height: 21px; padding-top: 1px; }
.snaps button { display: grid; place-items: center; }
.snaps svg { width: 19px; height: 15px; }

.right { display: flex; flex-direction: column; min-width: 0; min-height: 0; }
.otabs { display: flex; align-items: center; height: 20px; padding: 2px 3px 0 0; flex: none; }
.otabs button:not(.pill) { padding: 0 5px 0 6px; height: 13px; border-right: 1px solid #555; }
.otabs .pill { margin-left: auto; }
.info { flex: 1; min-height: 0; overflow: hidden; border: 1px solid #888; border-left-color: #ccc; border-top-color: #fff; padding: 2px 4px 0 3px; display: flex; flex-direction: column; margin-bottom: 1px; }
.info h3 { margin: 0 0 2px; height: 17px; padding: 1px; border: 1px solid #aaa; font: bold 10px/13px var(--ui); color: #000; flex: none; }
.field { display: flex; align-items: center; height: 15px; flex: none; }
.field label { width: 34px; white-space: nowrap; }
.field.sel label { width: 26px; }
.field .combo { flex: 1; height: 13px; border-color: #bbb; }
.field input { flex: 1; min-width: 0; height: 12px; border: 1px solid #333; background: #fff; padding-left: 1px; }
.check { display: flex; align-items: center; gap: 3px; height: 16px; white-space: nowrap; flex: none; padding-left: 1px; font-size: 8px; }
.name { display: flex; align-items: center; gap: 6px; height: 19px; padding-left: 4px; flex: none; }
.name label { width: 26px; }
.name input { flex: 1; min-width: 0; height: 14px; border: 1px solid #777; background: #fff; }
.ntabs { display: flex; align-items: center; height: 20px; padding: 2px; flex: none; margin-bottom: 1px; }
.ntabs button { width: 21px; border-right: 1px solid #777; }
.ntabs svg { width: 16px; height: 14px; margin: auto; }
.ntabs button:nth-child(2) { border-color: transparent; }
.list { flex: 1; min-height: 0; display: flex; flex-direction: column; justify-content: space-between; margin: 0 4px 6px 5px; border: 1px solid #888; background: #fff; padding: 1px; }
.list table { border-collapse: collapse; width: 100%; table-layout: fixed; }
.list th { height: 19px; padding: 0 0 0 4px; background: #f0f0f0; border-right: 1px solid #ccc; border-bottom: 1px solid #ccc; text-align: left; font-weight: normal; white-space: nowrap; }
.list th:first-child { width: 20px; }
.list th:nth-child(2) { width: 64px; }
.list th:last-child { border-right: 0; }
.hscroll { display: flex; align-items: center; justify-content: space-between; height: 15px; background: #f0f0f0; }
.hscroll i { width: 92px; height: 12px; background: #cdcdcd; margin-right: auto; }
.hscroll svg { width: 12px; height: 10px; }

.status { display: flex; align-items: center; gap: 2px; height: 16px; flex: none; border-bottom: 1px solid #223; padding: 2px 2px 0 4px; font: 10px/12px var(--ui); }
.help { margin-right: auto; }
.cell { width: 80px; height: 13px; padding-left: 3px; border: 1px solid #bbb; border-right-color: #888; }
.bell { width: 14px; height: 12px; margin: 0 1px; }
.key { height: 13px; border: 1px solid #bbb; min-width: 22px; text-align: center; font-size: 9px; }
.off { color: #888; }
.arrow { border: 3px solid transparent; border-left-color: #111; border-right: 0; }
```
